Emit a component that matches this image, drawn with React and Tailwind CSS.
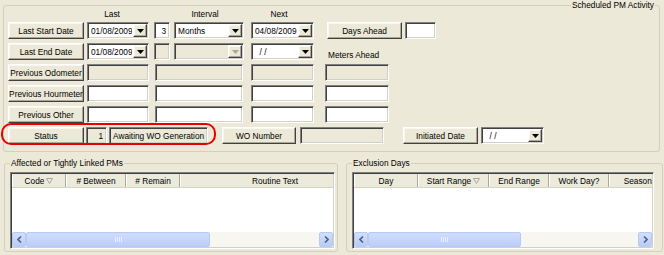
// Scheduled PM Activity form (XP style dialog)
const sunken =
  'border border-t-[#808080] border-l-[#808080] border-b-white border-r-white shadow-[inset_1px_1px_0_#404040,inset_-1px_-1px_0_#D4D0C8]';
const raised =
  'border border-t-white border-l-white border-b-[#404040] border-r-[#404040] shadow-[inset_-1px_-1px_0_#ACA899,inset_1px_1px_0_#F8F7F0] bg-[#ECE9D8]';

function Btn({ className = '', children }) {
  return (
    <div className={`${raised} h-[17px] shrink-0 flex items-center justify-center whitespace-nowrap ${className}`}>
      {children}
    </div>
  );
}

function Box({ className = '', white, right, children }) {
  return (
    <div
      className={`${sunken} h-[17px] shrink-0 flex items-center px-[3px] whitespace-nowrap ${
        white ? 'bg-white' : 'bg-[#ECE9D8]'
      } ${right ? 'justify-end' : ''} ${className}`}
    >
      {children}
    </div>
  );
}

function Arrow({ disabled }) {
  return (
    <svg width="7" height="4" viewBox="0 0 7 4">
      <path d="M0 0h7L3.5 4z" fill={disabled ? '#ACA899' : '#000'} />
    </svg>
  );
}

function Combo({ className = '', text, disabled }) {
  return (
    <div className={`${sunken} h-[17px] shrink-0 flex ${disabled ? 'bg-[#ECE9D8]' : 'bg-white'} ${className}`}>
      <span className="flex-1 flex items-center pl-[3px] whitespace-pre overflow-hidden">{text}</span>
      <span className={`${raised} w-[14px] m-[1px] flex items-center justify-center`}>
        <Arrow disabled={disabled} />
      </span>
    </div>
  );
}

function SortMark() {
  return (
    <svg width="7" height="6" viewBox="0 0 7 6" className="ml-[2px]">
      <path d="M0.5 0.5h6L3.5 5.5z" fill="none" stroke="#ACA899" />
    </svg>
  );
}

function ScrollBtn({ dir }) {
  return (
    <div className="w-[14px] shrink-0 rounded-[2px] border border-[#B7CAF5] bg-gradient-to-b from-[#D2DEFD] to-[#B9CCF8] flex items-center justify-center">
      <svg width="5" height="7" viewBox="0 0 5 7">
        <path
          d={dir === 'left' ? 'M4 0.5L1 3.5L4 6.5' : 'M1 0.5L4 3.5L1 6.5'}
          fill="none"
          stroke="#4D6185"
          strokeWidth="1.6"
        />
      </svg>
    </div>
  );
}

function ListView({ className = '', cols, thumb }) {
  return (
    <div className={`${sunken} p-[1px] bg-white flex flex-col overflow-hidden h-[77px] ${className}`}>
      <div className="flex h-[14px] shrink-0 bg-[#EBEADB] border-b border-[#D6D2C2] overflow-hidden">
        {cols.map((c) => (
          <div
            key={c.label}
            className={`shrink-0 flex items-center justify-center whitespace-nowrap border-l border-l-white border-r border-r-[#ACA899] ${c.w}`}
          >
            {c.label}
            {c.sort && <SortMark />}
          </div>
        ))}
      </div>
      <div className="flex-1 bg-white" />
      <div className="flex h-[15px] shrink-0 bg-[#F7F6F0]">
        <ScrollBtn dir="left" />
        <div
          className={`${thumb} shrink-0 rounded-[2px] border border-[#B7CAF5] bg-gradient-to-b from-[#CFDCFD] to-[#BCCEF9] flex items-center justify-center`}
        >
          <svg width="7" height="5" viewBox="0 0 7 5">
            <path d="M0.5 0v5M2.5 0v5M4.5 0v5M6.5 0v5" stroke="#E8EEFD" />
          </svg>
        </div>
        <div className="flex-1" />
        <ScrollBtn dir="right" />
      </div>
    </div>
  );
}

export default function App() {
  return (
    <div className="relative w-[664px] h-[255px] overflow-hidden bg-[#ECE9D8] text-black text-[8.3px] leading-[10px] font-['Liberation_Sans',Arial,sans-serif]">
      {/* Scheduled PM Activity */}
      <fieldset className="ml-[3px] w-[657px] h-[152px] border border-[#D0D0BF] rounded-[3px]">
        <legend className="ml-auto mr-[4px] px-[1px]">Scheduled PM Activity</legend>
        <div className="pl-[4px]">
          <div className="flex -mt-[1px] h-[10px] pl-[79px]">
            <span className="w-[50px] text-center">Last</span>
            <span className="ml-[43px] w-[50px] text-center">Interval</span>
            <span className="ml-[24px] w-[50px] text-center">Next</span>
          </div>

          <div className="mt-[3px] flex flex-col gap-[4px]">
            <div className="flex">
              <Btn className="w-[76px]">Last Start Date</Btn>
              <Combo className="ml-[3px] w-[62px]" text="01/08/2009" />
              <Box className="ml-[5px] w-[16px]" white right>3</Box>
              <Combo className="ml-[4px] w-[70px]" text="Months" />
              <Combo className="ml-[7px] w-[63px]" text="04/08/2009" />
              <Btn className="ml-[13px] w-[75px]">Days Ahead</Btn>
              <Box className="ml-[3px] w-[31px]" white />
            </div>

            <div className="flex">
              <Btn className="w-[76px]">Last End Date</Btn>
              <Combo className="ml-[3px] w-[62px]" text="01/08/2009" />
              <Box className="ml-[5px] w-[16px]" />
              <Combo className="ml-[4px] w-[70px]" text="" disabled />
              <Combo className="ml-[7px] w-[63px]" text="  / /" />
              <span className="ml-[14px] self-end whitespace-nowrap">Meters Ahead</span>
            </div>

            <div className="flex">
              <Btn className="w-[76px]">Previous Odometer</Btn>
              <Box className="ml-[3px] w-[62px]" />
              <Box className="ml-[6px] w-[88px]" />
              <Box className="ml-[8px] w-[63px]" />
              <Box className="ml-[11px] w-[64px]" />
            </div>

            <div className="flex">
              <Btn className="w-[76px]">Previous Hourmeter</Btn>
              <Box className="ml-[3px] w-[62px]" white />
              <Box className="ml-[6px] w-[88px]" white />
              <Box className="ml-[8px] w-[63px]" white />
              <Box className="ml-[11px] w-[64px]" white />
            </div>

            <div className="flex">
              <Btn className="w-[76px]">Previous Other</Btn>
              <Box className="ml-[3px] w-[62px]" white />
              <Box className="ml-[6px] w-[88px]" white />
              <Box className="ml-[8px] w-[63px]" white />
              <Box className="ml-[11px] w-[64px]" white />
            </div>

            <div className="flex">
              <Btn className="w-[76px]">Status</Btn>
              <Box className="ml-[2px] w-[21px]" right>1</Box>
              <Box className="ml-[2px] w-[99px]">Awaiting WO Generation</Box>
              <Btn className="ml-[14px] w-[74px]">WO Number</Btn>
              <Box className="ml-[4px] w-[84px]" />
              <Btn className="ml-[19px] w-[75px]">Initiated Date</Btn>
              <Combo className="ml-[3px] w-[63px]" text="  / /" />
            </div>
          </div>
        </div>
      </fieldset>

      {/* lower groups */}
      <div className="flex mt-[6px]">
        <fieldset className="ml-[4px] w-[334px] h-[94px] border border-[#D0D0BF] rounded-[3px]">
          <legend className="ml-[5px] px-[1px]">Affected or Tightly Linked PMs</legend>
          <div className="pl-[5px] pt-[4px]">
            <ListView
              className="w-[325px]"
              thumb="w-[184px]"
              cols={[
                { label: 'Code', w: 'w-[54px]', sort: true },
                { label: '# Between', w: 'w-[60px]' },
                { label: '# Remain', w: 'w-[54px]' },
                { label: 'Routine Text', w: 'w-[190px]' },
              ]}
            />
          </div>
        </fieldset>

        <fieldset className="ml-[8px] w-[317px] h-[94px] border border-[#D0D0BF] rounded-[3px]">
          <legend className="ml-[5px] px-[1px]">Exclusion Days</legend>
          <div className="pl-[5px] pt-[4px]">
            <ListView
              className="w-[302px]"
              thumb="w-[153px]"
              cols={[
                { label: 'Day', w: 'w-[64px]' },
                { label: 'Start Range', w: 'w-[71px]', sort: true },
                { label: 'End Range', w: 'w-[60px]' },
                { label: 'Work Day?', w: 'w-[60px]' },
                { label: 'Seasonal', w: 'w-[64px]' },
              ]}
            />
          </div>
        </fieldset>
      </div>

      {/* red highlight around Status */}
      <div className="absolute left-[1px] top-[123px] w-[215px] h-[22px] border-2 border-[#E60000] rounded-[10px]" />
    </div>
  );
}
